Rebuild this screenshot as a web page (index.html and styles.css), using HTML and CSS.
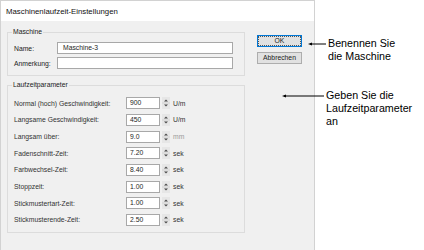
FILE: index.html
```html
<!DOCTYPE html>
<html lang="de">
<head>
<meta charset="utf-8">
<title>Maschinenlaufzeit-Einstellungen</title>
<link rel="stylesheet" href="styles.css">
</head>
<body>
<div class="page">
  <div class="dialog">
    <div class="titlebar">Maschinenlaufzeit-Einstellungen</div>
    <div class="dbody">
      <div class="groups">
        <div class="group g-machine">
          <div class="legend">Maschine</div>
          <div class="mrows">
            <div class="mlabel">Name:</div>
            <div class="field">Maschine-3</div>
            <div class="mlabel">Anmerkung:</div>
            <div class="field"></div>
          </div>
        </div>
        <div class="group g-params">
          <div class="legend">Laufzeitparameter</div>
          <div class="prows">
            <div class="plabel">Normal (hoch) Geschwindigkeit:</div>
            <div class="num">900</div><div class="spin"><svg width="8" height="12" viewBox="0 0 8 12"><rect x="0" y="0" width="8" height="12" fill="#e6e6e6"/><line x1="0" y1="6" x2="8" y2="6" stroke="#d2d2d2"/><path d="M2 4.5 L4 2.5 L6 4.5 Z" fill="#4a4a4a"/><path d="M2 7.5 L4 9.5 L6 7.5 Z" fill="#4a4a4a"/></svg></div><div class="unit">U/m</div>

            <div class="plabel">Langsame Geschwindigkeit:</div>
            <div class="num">450</div><div class="spin"><svg width="8" height="12" viewBox="0 0 8 12"><rect x="0" y="0" width="8" height="12" fill="#e6e6e6"/><line x1="0" y1="6" x2="8" y2="6" stroke="#d2d2d2"/><path d="M2 4.5 L4 2.5 L6 4.5 Z" fill="#4a4a4a"/><path d="M2 7.5 L4 9.5 L6 7.5 Z" fill="#4a4a4a"/></svg></div><div class="unit">U/m</div>

            <div class="plabel">Langsam über:</div>
            <div class="num">9.0</div><div class="spin"><svg width="8" height="12" viewBox="0 0 8 12"><rect x="0" y="0" width="8" height="12" fill="#e6e6e6"/><line x1="0" y1="6" x2="8" y2="6" stroke="#d2d2d2"/><path d="M2 4.5 L4 2.5 L6 4.5 Z" fill="#4a4a4a"/><path d="M2 7.5 L4 9.5 L6 7.5 Z" fill="#4a4a4a"/></svg></div><div class="unit dim">mm</div>

            <div class="plabel">Fadenschnitt-Zeit:</div>
            <div class="num">7.20</div><div class="spin"><svg width="8" height="12" viewBox="0 0 8 12"><rect x="0" y="0" width="8" height="12" fill="#e6e6e6"/><line x1="0" y1="6" x2="8" y2="6" stroke="#d2d2d2"/><path d="M2 4.5 L4 2.5 L6 4.5 Z" fill="#4a4a4a"/><path d="M2 7.5 L4 9.5 L6 7.5 Z" fill="#4a4a4a"/></svg></div><div class="unit">sek</div>

            <div class="plabel">Farbwechsel-Zeit:</div>
            <div class="num">8.40</div><div class="spin"><svg width="8" height="12" viewBox="0 0 8 12"><rect x="0" y="0" width="8" height="12" fill="#e6e6e6"/><line x1="0" y1="6" x2="8" y2="6" stroke="#d2d2d2"/><path d="M2 4.5 L4 2.5 L6 4.5 Z" fill="#4a4a4a"/><path d="M2 7.5 L4 9.5 L6 7.5 Z" fill="#4a4a4a"/></svg></div><div class="unit">sek</div>

            <div class="plabel">Stoppzeit:</div>
            <div class="num">1.00</div><div class="spin"><svg width="8" height="12" viewBox="0 0 8 12"><rect x="0" y="0" width="8" height="12" fill="#e6e6e6"/><line x1="0" y1="6" x2="8" y2="6" stroke="#d2d2d2"/><path d="M2 4.5 L4 2.5 L6 4.5 Z" fill="#4a4a4a"/><path d="M2 7.5 L4 9.5 L6 7.5 Z" fill="#4a4a4a"/></svg></div><div class="unit">sek</div>

            <div class="plabel">Stickmustertart-Zeit:</div>
            <div class="num">1.00</div><div class="spin"><svg width="8" height="12" viewBox="0 0 8 12"><rect x="0" y="0" width="8" height="12" fill="#e6e6e6"/><line x1="0" y1="6" x2="8" y2="6" stroke="#d2d2d2"/><path d="M2 4.5 L4 2.5 L6 4.5 Z" fill="#4a4a4a"/><path d="M2 7.5 L4 9.5 L6 7.5 Z" fill="#4a4a4a"/></svg></div><div class="unit">sek</div>

            <div class="plabel">Stickmusterende-Zeit:</div>
            <div class="num">2.50</div><div class="spin"><svg width="8" height="12" viewBox="0 0 8 12"><rect x="0" y="0" width="8" height="12" fill="#e6e6e6"/><line x1="0" y1="6" x2="8" y2="6" stroke="#d2d2d2"/><path d="M2 4.5 L4 2.5 L6 4.5 Z" fill="#4a4a4a"/><path d="M2 7.5 L4 9.5 L6 7.5 Z" fill="#4a4a4a"/></svg></div><div class="unit">sek</div>
          </div>
        </div>
      </div>
      <div class="buttons">
        <div class="btn btn-ok"><div class="focus">OK</div></div>
        <div class="btn">Abbrechen</div>
      </div>
    </div>
  </div>

  <div class="callout c1">
    <svg class="arrow" width="18" height="6" viewBox="0 0 18 6"><line x1="2" y1="3" x2="18" y2="3" stroke="#000" stroke-width="1"/><path d="M0 3 L4 1.5 L4 4.5 Z" fill="#000"/></svg>
    <div class="ctext">Benennen Sie<br>die Maschine</div>
  </div>
  <div class="callout c2">
    <svg class="arrow" width="42" height="6" viewBox="0 0 42 6"><line x1="2" y1="3" x2="42" y2="3" stroke="#000" stroke-width="1"/><path d="M0 3 L4 1.5 L4 4.5 Z" fill="#000"/></svg>
    <div class="ctext">Geben Sie die<br>Laufzeitparameter<br>an</div>
  </div>
</div>
</body>
</html>
```

FILE: styles.css
```css
* { box-sizing: border-box; }
html, body { margin: 0; padding: 0; background: #ffffff; }
.page {
  position: relative;
  width: 424px;
  height: 250px;
  overflow: hidden;
  font-family: "Liberation Sans", Arial, sans-serif;
  font-size: 6.8px;
  color: #1e1e1e;
}
.dialog {
  width: 315px;
  height: 250px;
  border: 1px solid #d2d2d2;
  border-bottom: none;
  background: #f0f0f0;
}
.titlebar {
  height: 20px;
  background: #ffffff;
  font-size: 7.8px;
  color: #111;
  display: flex;
  align-items: center;
  padding-left: 5px;
  padding-top: 1px;
}
.dbody {
  display: flex;
  padding: 11px 0 0 6px;
}
.groups { width: 238px; }
.group {
  border: 1px solid #dcdcdc;
  padding: 0 11px 0 6px;
}
.legend {
  width: fit-content;
  margin: -5px 0 0 -2px;
  padding: 0 1px;
  height: 8px;
  line-height: 8px;
  background: #f0f0f0;
  color: #222;
}
.g-machine { height: 44px; }
.mrows {
  display: grid;
  grid-template-columns: 43px 1fr;
  grid-auto-rows: 12px;
  row-gap: 3px;
  margin-top: 6px;
  align-items: center;
}
.mlabel { color: #222; }
.field {
  height: 12px;
  background: #fff;
  border: 1px solid #a8a8a8;
  padding-left: 5px;
  line-height: 10px;
}
.g-params {
  margin-top: 9px;
  height: 148px;
}
.prows {
  margin-top: 6px;
  display: grid;
  grid-template-columns: 112px 34px 8px auto;
  grid-auto-rows: 16.67px;
  column-gap: 0;
  align-items: center;
}
.plabel { color: #333; }
.num {
  height: 12px;
  background: #fff;
  border: 1px solid #a8a8a8;
  padding-left: 3px;
  line-height: 10px;
}
.spin {
  height: 12px;
  width: 8px;
  margin-left: 2px;
  display: flex;
}
.spin svg { display: block; }
.unit { padding-left: 5px; color: #333; }
.unit.dim { color: #9a9a9a; }
.buttons {
  margin-left: 12px;
  margin-top: 3px;
  width: 45px;
  display: flex;
  flex-direction: column;
  gap: 5px;
}
.btn {
  height: 12px;
  border: 1px solid #adadad;
  background: #e1e1e1;
  display: flex;
  align-items: center;
  justify-content: center;
  line-height: 8px;
  color: #222;
}
.btn-ok {
  border-color: #0078d7;
  align-items: stretch;
  justify-content: stretch;
}
.focus {
  flex: 1;
  border: 1px dotted #555;
  display: flex;
  align-items: center;
  justify-content: center;
  line-height: 8px;
}
.callout {
  position: absolute;
  display: flex;
  align-items: flex-start;
  font-family: "Liberation Sans", Arial, sans-serif;
  font-size: 10.7px;
  line-height: 13px;
  color: #000;
}
.callout .arrow { display: block; margin-top: 4px; flex: none; }
.ctext { margin-left: 2px; }
.c1 { left: 308px; top: 37px; }
.c2 { left: 282px; top: 89px; }
```
